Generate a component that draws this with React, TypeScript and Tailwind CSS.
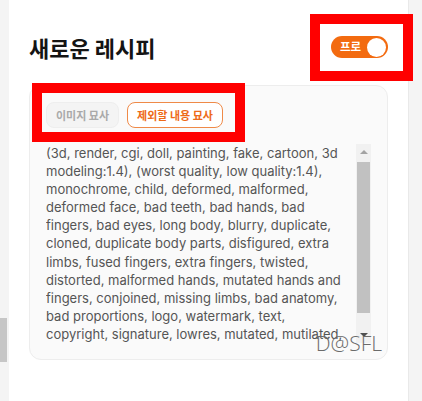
import React from "react";

const lines = [
  "(3d, render, cgi, doll, painting, fake, cartoon, 3d",
  "modeling:1.4), (worst quality, low quality:1.4),",
  "monochrome, child, deformed, malformed,",
  "deformed face, bad teeth, bad hands, bad",
  "fingers, bad eyes, long body, blurry, duplicate,",
  "cloned, duplicate body parts, disfigured, extra",
  "limbs, fused fingers, extra fingers, twisted,",
  "distorted, malformed hands, mutated hands and",
  "fingers, conjoined, missing limbs, bad anatomy,",
  "bad proportions, logo, watermark, text,",
  "copyright, signature, lowres, mutated, mutilated,",
];

const KR = { fontFamily: '"Noto Sans CJK KR", "Noto Sans", sans-serif' };
const TXT = { fontFamily: 'Inter, "Noto Sans CJK KR", sans-serif' };

export default function App() {
  return (
    <div className="relative flex w-[422px] h-[401px] overflow-hidden bg-[#f4f4f4]">
      {/* left strip */}
      <div className="w-[9px] shrink-0 flex flex-col">
        <div className="mt-[318px] h-[44px] w-[7px] bg-[#c6c6c6]" />
      </div>

      {/* panel */}
      <div className="w-[400px] shrink-0 h-full bg-white border-r border-[#e9e9e9] px-5">
        <div className="flex items-center justify-between pt-[33px] h-[61px]">
          <h1 className="text-[22px] leading-[28px] font-bold text-[#141414]" style={KR}>
            새로운 레시피
          </h1>
          <div className="flex items-center h-[22px] w-[57px] rounded-full bg-[#f36b10] pl-[9px] pr-[2px] justify-between">
            <span className="text-[11.5px] font-bold text-white leading-none" style={KR}>프로</span>
            <span className="w-[19px] h-[19px] rounded-full bg-white" />
          </div>
        </div>

        <div className="relative mt-6 rounded-xl border border-[#ededed] bg-[#fafafa] p-4">
          <div className="flex gap-2">
            <button className="h-[26px] px-[9px] rounded-lg border border-[#eeeeee] bg-[#f4f4f4] text-[11px] font-bold text-[#a9a9a9]" style={KR}>
              이미지 묘사
            </button>
            <button className="h-[26px] px-[9px] rounded-lg border border-[#ef8a48] bg-white text-[11px] font-bold text-[#ee6a18]" style={KR}>
              제외할 내용 묘사
            </button>
          </div>

          <div className="mt-4 flex h-[199px]">
            <div className="flex-1 overflow-hidden text-[13px] leading-[18.1px] text-[#555555]" style={TXT}>
              {lines.map((l, i) => (
                <div key={i} className="whitespace-nowrap">{l}</div>
              ))}
            </div>
            <div className="w-[15px] shrink-0 flex flex-col bg-[#f1f1f1]">
              <div className="h-[16px] flex items-center justify-center">
                <div className="w-0 h-0 border-l-[4px] border-r-[4px] border-b-[4px] border-l-transparent border-r-transparent border-b-[#a3a3a3]" />
              </div>
              <div className="mx-[1px] mt-[2px] h-[151px] bg-[#c1c1c1]" />
              <div className="flex-1" />
              <div className="h-[16px] flex items-center justify-center">
                <div className="w-0 h-0 border-l-[4px] border-r-[4px] border-t-[4px] border-l-transparent border-r-transparent border-t-[#505050]" />
              </div>
            </div>
          </div>

          <div className="absolute right-[5px] bottom-[5px] text-[21px] leading-none font-light text-[#6b6b6b]" style={{ fontFamily: '"Open Sans", sans-serif' }}>
            D@SFL
          </div>
        </div>
      </div>

      {/* annotation boxes */}
      <div className="absolute left-[310px] top-[14px] w-[103px] h-[67px] border-[10px] border-[#ff0000] pointer-events-none" />
      <div className="absolute left-[32px] top-[83px] w-[213px] h-[59px] border-[10px] border-[#ff0000] pointer-events-none" />
    </div>
  );
}
